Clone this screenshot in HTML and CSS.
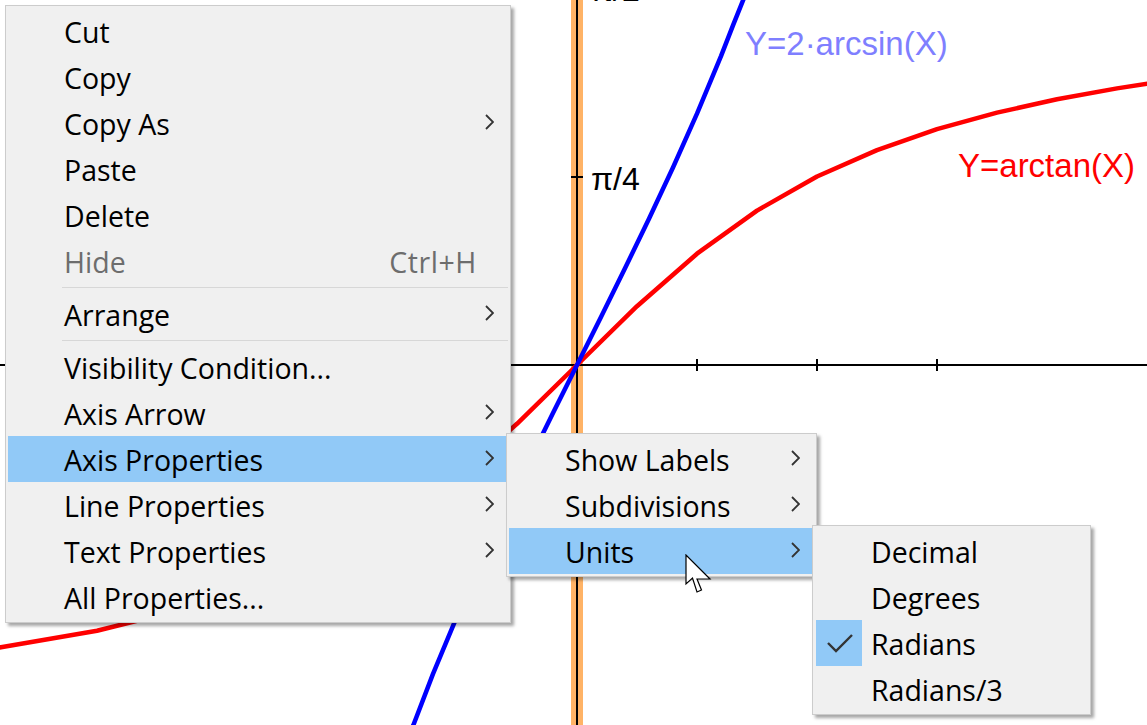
FILE: index.html
```html
<!DOCTYPE html>
<html>

<head>
    <title>Axis Units</title>
    <link rel="stylesheet" href="styles.css">
</head>

<body>
    <div class="canvas">
        <svg class="graph" width="1147" height="725" viewBox="0 0 1147 725">
            <rect class="axis-band" x="571" y="0" width="12" height="725"></rect>
            <line class="axis" x1="0" y1="365" x2="1147" y2="365"></line>
            <line class="axis" x1="577" y1="0" x2="577" y2="725"></line>
            <line class="axis" x1="697" y1="359" x2="697" y2="371"></line>
            <line class="axis" x1="817" y1="359" x2="817" y2="371"></line>
            <line class="axis" x1="937" y1="359" x2="937" y2="371"></line>
            <line class="axis" x1="571" y1="177" x2="583" y2="177"></line>
            <text class="tick-label" x="591" y="1">π/2</text>
            <text class="tick-label" x="591" y="190">π/4</text>

            <polyline class="curve red" points="-3,648 1,647.2 97,630.7 217,600.9 337,553.5 397,519.4 457,476.3 517,423.8 577,365 637,306.2 697,253.7 757,210.6 817,176.5 877,150.1 937,129.1 997,112.6 1057,99.3 1117,88.4 1153,82.8"></polyline>
            <polyline class="curve blue" points="412,728 413.4,725 433,673.9 457,616.3 481,562.5 505,511.3 529,461.7 553,413.1 577,365 601,316.9 625,268.3 649,218.7 673,167.5 697,113.7 721,56.1 733,25.4 746,-7"></polyline>

            <text class="curve-label blue-label" x="745" y="55">Y=2·arcsin(X)</text>
            <text class="curve-label red-label" x="958" y="177">Y=arctan(X)</text>
        </svg>

        <div class="menu main-menu">
            <div class="item"><span class="label">Cut</span></div>
            <div class="item"><span class="label">Copy</span></div>
            <div class="item"><span class="label">Copy As</span><span class="arrow"><svg width="9" height="16" viewBox="0 0 9 16"><polyline points="1,1 8,8 1,15"></polyline></svg></span></div>
            <div class="item"><span class="label">Paste</span></div>
            <div class="item"><span class="label">Delete</span></div>
            <div class="item disabled"><span class="label">Hide</span><span class="shortcut">Ctrl+H</span></div>
            <div class="separator"></div>
            <div class="item"><span class="label">Arrange</span><span class="arrow"><svg width="9" height="16" viewBox="0 0 9 16"><polyline points="1,1 8,8 1,15"></polyline></svg></span></div>
            <div class="separator"></div>
            <div class="item"><span class="label">Visibility Condition...</span></div>
            <div class="item"><span class="label">Axis Arrow</span><span class="arrow"><svg width="9" height="16" viewBox="0 0 9 16"><polyline points="1,1 8,8 1,15"></polyline></svg></span></div>
            <div class="item active"><span class="label">Axis Properties</span><span class="arrow"><svg width="9" height="16" viewBox="0 0 9 16"><polyline points="1,1 8,8 1,15"></polyline></svg></span></div>
            <div class="item"><span class="label">Line Properties</span><span class="arrow"><svg width="9" height="16" viewBox="0 0 9 16"><polyline points="1,1 8,8 1,15"></polyline></svg></span></div>
            <div class="item"><span class="label">Text Properties</span><span class="arrow"><svg width="9" height="16" viewBox="0 0 9 16"><polyline points="1,1 8,8 1,15"></polyline></svg></span></div>
            <div class="item"><span class="label">All Properties...</span></div>
        </div>

        <div class="menu axis-menu">
            <div class="item"><span class="label">Show Labels</span><span class="arrow"><svg width="9" height="16" viewBox="0 0 9 16"><polyline points="1,1 8,8 1,15"></polyline></svg></span></div>
            <div class="item"><span class="label">Subdivisions</span><span class="arrow"><svg width="9" height="16" viewBox="0 0 9 16"><polyline points="1,1 8,8 1,15"></polyline></svg></span></div>
            <div class="item active"><span class="label">Units</span><span class="arrow"><svg width="9" height="16" viewBox="0 0 9 16"><polyline points="1,1 8,8 1,15"></polyline></svg></span></div>
        </div>

        <div class="menu units-menu">
            <div class="item"><span class="label">Decimal</span></div>
            <div class="item"><span class="label">Degrees</span></div>
            <div class="item checked">
                <span class="check"><svg width="46" height="46" viewBox="0 0 46 46"><polyline points="12,23 20,31 36,15"></polyline></svg></span>
                <span class="label">Radians</span>
            </div>
            <div class="item"><span class="label">Radians/3</span></div>
        </div>

        <svg class="cursor" width="28" height="42" viewBox="0 0 28 42">
            <polygon points="1,1 1,30 7.5,24 12,38 16.5,36 12,25 25,25"></polygon>
        </svg>
    </div>
</body>

</html>
```

FILE: styles.css
```css
body {
    margin: 0;
    background: #fff;
    font-family: "Open Sans", "Noto Sans", sans-serif;
}

.canvas {
    position: relative;
    width: 1147px;
    height: 725px;
    overflow: hidden;
}

.graph {
    position: absolute;
    left: 0;
    top: 0;
}

.axis-band {
    fill: #ffb366;
}

.axis {
    stroke: #000;
    stroke-width: 2;
}

.tick-label {
    font-family: "Liberation Sans", Arial, sans-serif;
    font-size: 32px;
    fill: #000;
}

.curve {
    fill: none;
    stroke-width: 4.5;
    stroke-linejoin: round;
}

.red {
    stroke: #ff0000;
}

.blue {
    stroke: #0000ff;
}

.curve-label {
    font-family: "Liberation Sans", Arial, sans-serif;
    font-size: 33px;
}

.blue-label {
    fill: #7f7fff;
}

.red-label {
    fill: #ff0000;
}

/* context menus */
.menu {
    position: absolute;
    box-sizing: border-box;
    padding: 2px;
    background: #f0f0f0;
    border: 1px solid #ccc;
    box-shadow: 3px 3px 3px rgba(0, 0, 0, 0.35);
}

.main-menu {
    left: 5px;
    top: 5px;
    width: 506px;
}

.axis-menu {
    left: 506px;
    top: 433px;
    width: 311px;
}

.units-menu {
    left: 812px;
    top: 525px;
    width: 279px;
}

.item {
    display: flex;
    align-items: center;
    height: 46px;
    padding: 1px 14px 0 56px;
    box-sizing: border-box;
    font-size: 28.5px;
    color: #000;
    position: relative;
}

.item .label {
    flex: 1;
    white-space: nowrap;
}

.item.active {
    background: #91c9f7;
}

.item.disabled {
    color: #6d6d6d;
}

.shortcut {
    padding-right: 17px;
    letter-spacing: 0.6px;
}

.arrow {
    display: flex;
    margin-top: -3px;
}

.arrow polyline {
    fill: none;
    stroke: #333;
    stroke-width: 1.8;
}

.separator {
    height: 1px;
    margin: 3px 0 3px 54px;
    background: #d7d7d7;
}

.check {
    position: absolute;
    left: 1px;
    top: 0;
    width: 46px;
    height: 46px;
    background: #91c9f7;
}

.check polyline {
    fill: none;
    stroke: #333;
    stroke-width: 2.4;
}

.cursor {
    position: absolute;
    left: 685px;
    top: 554px;
}

.cursor polygon {
    fill: #fff;
    stroke: #000;
    stroke-width: 1.2;
    stroke-linejoin: miter;
}
```
